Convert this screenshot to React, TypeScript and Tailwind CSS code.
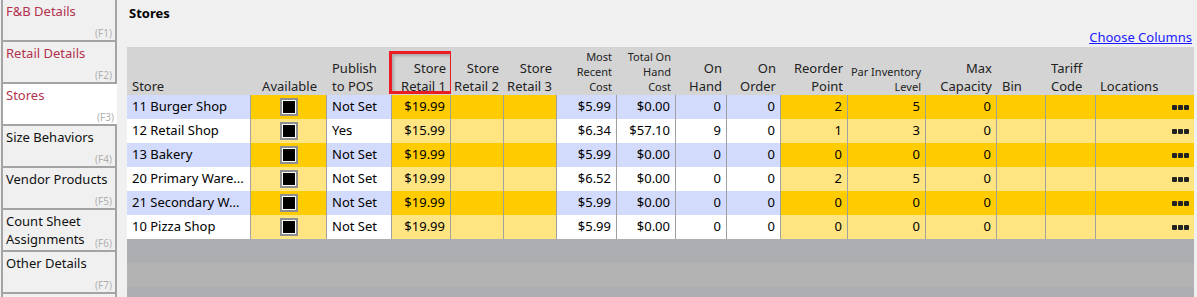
type Col = {
  key: string;
  label: string[];
  align: 'left' | 'right' | 'center';
  tone: 'blue' | 'gold';
  small?: boolean;
};

const columns: Col[] = [
  { key: 'store', label: ['Store'], align: 'left', tone: 'blue' },
  { key: 'available', label: ['Available'], align: 'center', tone: 'gold' },
  { key: 'pos', label: ['Publish', 'to POS'], align: 'left', tone: 'blue' },
  { key: 'sr1', label: ['Store', 'Retail 1'], align: 'right', tone: 'gold' },
  { key: 'sr2', label: ['Store', 'Retail 2'], align: 'right', tone: 'gold' },
  { key: 'sr3', label: ['Store', 'Retail 3'], align: 'right', tone: 'gold' },
  { key: 'mrc', label: ['Most', 'Recent', 'Cost'], align: 'right', tone: 'blue', small: true },
  { key: 'tohc', label: ['Total On', 'Hand', 'Cost'], align: 'right', tone: 'blue', small: true },
  { key: 'onHand', label: ['On', 'Hand'], align: 'right', tone: 'blue' },
  { key: 'onOrder', label: ['On', 'Order'], align: 'right', tone: 'blue' },
  { key: 'reorder', label: ['Reorder', 'Point'], align: 'right', tone: 'gold' },
  { key: 'par', label: ['Par Inventory', 'Level'], align: 'right', tone: 'gold', small: true },
  { key: 'max', label: ['Max', 'Capacity'], align: 'right', tone: 'gold' },
  { key: 'bin', label: ['Bin'], align: 'left', tone: 'gold' },
  { key: 'tariff', label: ['Tariff', 'Code'], align: 'left', tone: 'gold' },
  { key: 'locations', label: ['Locations'], align: 'right', tone: 'gold' },
];

const rows: Record<string, string>[] = [
  { store: '11 Burger Shop', pos: 'Not Set', sr1: '$19.99', mrc: '$5.99', tohc: '$0.00', onHand: '0', onOrder: '0', reorder: '2', par: '5', max: '0' },
  { store: '12 Retail Shop', pos: 'Yes', sr1: '$15.99', mrc: '$6.34', tohc: '$57.10', onHand: '9', onOrder: '0', reorder: '1', par: '3', max: '0' },
  { store: '13 Bakery', pos: 'Not Set', sr1: '$19.99', mrc: '$5.99', tohc: '$0.00', onHand: '0', onOrder: '0', reorder: '0', par: '0', max: '0' },
  { store: '20 Primary Ware...', pos: 'Not Set', sr1: '$19.99', mrc: '$6.52', tohc: '$0.00', onHand: '0', onOrder: '0', reorder: '2', par: '5', max: '0' },
  { store: '21 Secondary W...', pos: 'Not Set', sr1: '$19.99', mrc: '$5.99', tohc: '$0.00', onHand: '0', onOrder: '0', reorder: '0', par: '0', max: '0' },
  { store: '10 Pizza Shop', pos: 'Not Set', sr1: '$19.99', mrc: '$5.99', tohc: '$0.00', onHand: '0', onOrder: '0', reorder: '0', par: '0', max: '0' },
];

const tabs = [
  { name: 'F&B Details', key: 'F1', filled: true },
  { name: 'Retail Details', key: 'F2', filled: true },
  { name: 'Stores', key: 'F3', filled: true, active: true },
  { name: 'Size Behaviors', key: 'F4' },
  { name: 'Vendor Products', key: 'F5' },
  { name: 'Count Sheet Assignments', key: 'F6' },
  { name: 'Other Details', key: 'F7' },
  { name: '', key: '' },
];

function Checkbox() {
  return (
    <div className="w-[18px] h-[18px] border-2 border-[#8f8f8f] bg-white p-[1px]">
      <div className="w-full h-full bg-black" />
    </div>
  );
}

function Dots() {
  return (
    <div className="flex gap-[1px]">
      <span className="w-[5px] h-[5px] rounded-[1px] bg-[#222]" />
      <span className="w-[5px] h-[5px] rounded-[1px] bg-[#222]" />
      <span className="w-[5px] h-[5px] rounded-[1px] bg-[#222]" />
    </div>
  );
}

function cellTone(tone: Col['tone'], odd: boolean) {
  if (tone === 'gold') return odd ? 'bg-[#ffcc00]' : 'bg-[#ffe482]';
  return odd ? 'bg-[#d3dbfc]' : 'bg-white';
}

function alignClass(align: Col['align']) {
  if (align === 'right') return 'justify-end text-right pr-[5px]';
  if (align === 'center') return 'justify-center text-center';
  return 'justify-start text-left pl-[5px]';
}

export default function App() {
  return (
    <div className="h-[297px] w-[1197px] overflow-hidden bg-[#f0f0f0] flex font-['Noto_Sans',sans-serif] text-[13px] text-black">
      <div className="w-[117px] shrink-0 pl-[1px]">
        {tabs.map((tab) => (
          <div
            key={tab.name + tab.key}
            className={`relative h-[42px] border-l-2 border-b-2 border-[#a4a4a4] pl-[3px] pt-[2px] leading-[18px] ${
              tab.active ? 'bg-white' : 'border-r-2 bg-[#f0f0f0]'
            }`}
          >
            <div className={`w-[104px] ${tab.filled ? 'text-[#b3324e]' : 'text-[#111]'}`}>{tab.name}</div>
            {tab.key && (
              <span className="absolute right-[3px] bottom-[1px] text-[10px] leading-[12px] text-[#b0b0b0]">({tab.key})</span>
            )}
          </div>
        ))}
      </div>

      <div className="ml-[10px] w-[1067px] shrink-0">
        <div className="h-[47px] relative">
          <div className="pl-[2px] pt-[4px] font-bold leading-[18px]">Stores</div>
          <a href="#" className="absolute right-[2px] top-[28px] leading-[18px] text-[#1a1aff] underline">
            Choose Columns
          </a>
        </div>

        <div className="grid grid-cols-[124px_76px_65px_59px_53px_53px_60px_59px_51px_54px_67px_78px_71px_49px_50px_98px]">
          {columns.map((col) => (
            <div
              key={col.key}
              className={`relative h-[48px] bg-[#d4d4d4] flex flex-col justify-end text-[#222] ${
                col.small ? 'text-[11px] leading-[15px] pb-[1px]' : 'leading-[18px]'
              } ${col.align === 'right' ? 'items-end text-right pr-[5px]' : col.align === 'center' ? 'items-center' : 'items-start pl-[5px]'} ${
                col.key === 'available' ? 'items-end pr-[10px]' : ''
              } ${col.key === 'locations' ? '!items-start pl-[4px]' : ''}`}
            >
              {col.label.map((line) => (
                <div key={line} className="whitespace-nowrap">{line}</div>
              ))}
              {col.key === 'sr1' && (
                <div className="absolute left-[-3px] top-[4px] w-[64px] h-[43px] border-[3px] border-[#ec1c24] shadow-[inset_2px_2px_3px_rgba(0,0,0,0.2)]" />
              )}
            </div>
          ))}

          {rows.map((row, i) =>
            columns.map((col, c) => (
              <div
                key={`${i}-${col.key}`}
                className={`h-[24px] flex items-center whitespace-nowrap overflow-hidden ${cellTone(col.tone, i % 2 === 0)} ${
                  c < columns.length - 1 ? 'border-r border-[#a0a0a0]' : ''
                } ${alignClass(col.align)} ${col.key === 'locations' ? 'pr-[0px]' : ''}`}
              >
                {col.key === 'available' ? <Checkbox /> : col.key === 'locations' ? <Dots /> : row[col.key] ?? ''}
              </div>
            ))
          )}

          <div className="col-span-full h-[24px] bg-[#adaeb1]" />
          <div className="col-span-full h-[24px] bg-[#b3b3b3]" />
          <div className="col-span-full h-[24px] bg-[#adaeb1]" />
        </div>
      </div>
    </div>
  );
}
